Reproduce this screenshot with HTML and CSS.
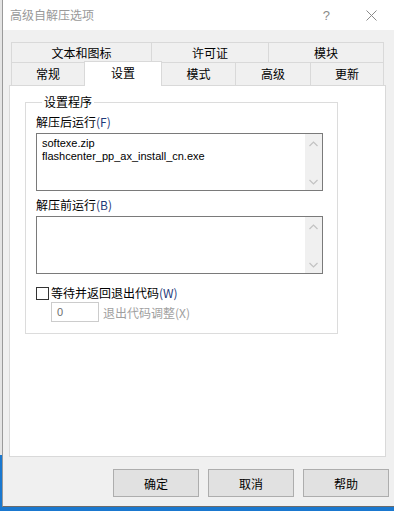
FILE: index.html
```html
<!DOCTYPE html>
<html lang="zh-CN">
<head>
  <meta charset="UTF-8">
  <title>高级自解压选项</title>
  <link rel="stylesheet" href="styles.css">
</head>
<body>
  <div class="window">
    <div class="titlebar">
      <span class="title">高级自解压选项</span>
      <span class="help">?</span>
      <svg class="close" width="11" height="11" viewBox="0 0 11 11"><path d="M0.5 0.5L10.5 10.5M10.5 0.5L0.5 10.5" stroke="#8a8a8a" stroke-width="1"/></svg>
    </div>

    <div class="dialog">
      <div class="tabs">
        <div class="tab-row">
          <div class="tab w141">文本和图标</div>
          <div class="tab w118">许可证</div>
          <div class="tab w116">模块</div>
        </div>
        <div class="tab-row low">
          <div class="tab w74">常规</div>
          <div class="tab w78 active">设置</div>
          <div class="tab w75">模式</div>
          <div class="tab w76">高级</div>
          <div class="tab w74">更新</div>
        </div>
      </div>

      <div class="panel">
        <fieldset class="group">
          <legend>设置程序</legend>

          <div class="field-label">解压后运行<span class="key">(F)</span></div>
          <div class="textbox">
            <div class="textbox-text">
              <div>softexe.zip</div>
              <div>flashcenter_pp_ax_install_cn.exe</div>
            </div>
            <div class="vscroll">
              <svg width="9" height="6" viewBox="0 0 9 6"><path d="M0.5 5L4.5 1L8.5 5" fill="none" stroke="#c2c2c2" stroke-width="1.2"/></svg>
              <svg width="9" height="6" viewBox="0 0 9 6"><path d="M0.5 1L4.5 5L8.5 1" fill="none" stroke="#c2c2c2" stroke-width="1.2"/></svg>
            </div>
          </div>

          <div class="field-label">解压前运行<span class="key">(B)</span></div>
          <div class="textbox">
            <div class="textbox-text"></div>
            <div class="vscroll">
              <svg width="9" height="6" viewBox="0 0 9 6"><path d="M0.5 5L4.5 1L8.5 5" fill="none" stroke="#c2c2c2" stroke-width="1.2"/></svg>
              <svg width="9" height="6" viewBox="0 0 9 6"><path d="M0.5 1L4.5 5L8.5 1" fill="none" stroke="#c2c2c2" stroke-width="1.2"/></svg>
            </div>
          </div>

          <div class="check-row">
            <span class="checkbox"></span>
            <span>等待并返回退出代码<span class="key">(W)</span></span>
          </div>
          <div class="spin-row">
            <div class="spin">0</div>
            <span class="disabled">退出代码调整(X)</span>
          </div>
        </fieldset>
      </div>

      <div class="buttons">
        <button class="btn">确定</button>
        <button class="btn">取消</button>
        <button class="btn">帮助</button>
      </div>
    </div>
  </div>
</body>
</html>
```

FILE: styles.css
```css
body {
  margin: 0;
  width: 394px;
  height: 511px;
  overflow: hidden;
  font-family: "Noto Sans CJK SC", "Noto Sans", sans-serif;
  font-size: 12px;
  color: #000;
  background: linear-gradient(to bottom, #e4e4e4 0, #e4e4e4 455px, #1a78cf 455px);
}

.window {
  margin-left: 2px;
  width: 391px;
  height: 506px;
  border-left: 1px solid #9a9a9a;
  border-bottom: 1px solid #6c6c6c;
  background: #f0f0f0;
}

/* title bar */
.titlebar {
  height: 30px;
  background: #fff;
  display: flex;
  align-items: center;
  padding-left: 7px;
}
.title { flex: 1; color: #999; line-height: 14px; }
.help { color: #8a8a8a; font-family: "Liberation Sans", sans-serif; font-size: 13px; margin-right: 36px; }
.close { margin-right: 17px; }

.dialog { padding: 12px 0 0 6px; }

/* tabs */
.tabs { margin-left: 2px; }
.tab-row { display: flex; height: 20px; align-items: flex-start; }
.tab-row.low { height: 23px; }
.tab {
  box-sizing: border-box;
  height: 100%;
  border: 1px solid #d9d9d9;
  border-bottom: none;
  background: #f0f0f0;
  text-align: center;
  line-height: 19px;
  margin-left: -1px;
}
.tab:first-child { margin-left: 0; }
.tab-row.low .tab { line-height: 21px; }
.tab-row.low .tab.active {
  position: relative;
  z-index: 1;
  height: 25px;
  margin-top: -1px;
  background: #fff;
  line-height: 21px;
}
.w141 { width: 141px; }
.w118 { width: 118px; }
.w116 { width: 116px; }
.w74 { width: 74px; }
.w75 { width: 75px; }
.w76 { width: 76px; }
.w78 { width: 78px; }

.panel {
  box-sizing: border-box;
  width: 377px;
  height: 372px;
  border: 1px solid #d9d9d9;
  background: #fff;
  padding: 8px 0 0 15px;
}

/* group box */
.group {
  box-sizing: border-box;
  width: 313px;
  height: 240px;
  margin: 0;
  border: 1px solid #dcdcdc;
  padding: 0 0 0 10px;
}
.group legend {
  margin-left: 6px;
  padding: 0 2px;
  line-height: 16px;
}

.field-label { line-height: 14px; margin-top: 3px; }
.group .field-label:first-of-type { margin-top: 5px; }
.key { color: #1e3a7a; }

.textbox {
  box-sizing: border-box;
  width: 287px;
  height: 58px;
  border: 1px solid #7a7a7a;
  display: flex;
  background: #fff;
}
.textbox-text {
  flex: 1;
  padding: 3px 0 0 5px;
  font-family: "Liberation Sans", Arial, sans-serif;
  font-size: 11px;
  line-height: 13px;
}
.vscroll {
  width: 17px;
  background: #f0f0f0;
  display: flex;
  flex-direction: column;
  justify-content: space-between;
  align-items: center;
  padding: 7px 0 5px;
  box-sizing: border-box;
}

.field-label + .textbox { margin-top: 4px; }
.textbox + .field-label { margin-top: 7px; }

.check-row {
  display: flex;
  align-items: center;
  margin-top: 12px;
  line-height: 14px;
}
.checkbox {
  box-sizing: border-box;
  width: 13px;
  height: 13px;
  border: 1px solid #333;
  margin-right: 2px;
}

.spin-row {
  display: flex;
  align-items: center;
  margin: 2px 0 0 15px;
}
.spin {
  box-sizing: border-box;
  width: 48px;
  height: 20px;
  border: 1px solid #cccccc;
  padding-left: 5px;
  line-height: 18px;
  color: #6d6d6d;
  font-family: "Liberation Sans", Arial, sans-serif;
  font-size: 11px;
  margin-right: 4px;
}
.disabled { color: #a0a0a0; }

/* bottom buttons */
.buttons {
  display: flex;
  justify-content: flex-end;
  gap: 9px;
  padding: 12px 5px 0 0;
}
.btn {
  width: 86px;
  height: 28px;
  background: #e1e1e1;
  border: 1px solid #adadad;
  font-family: "Noto Sans CJK SC", sans-serif;
  font-size: 12px;
  color: #000;
  padding: 0;
}
```
